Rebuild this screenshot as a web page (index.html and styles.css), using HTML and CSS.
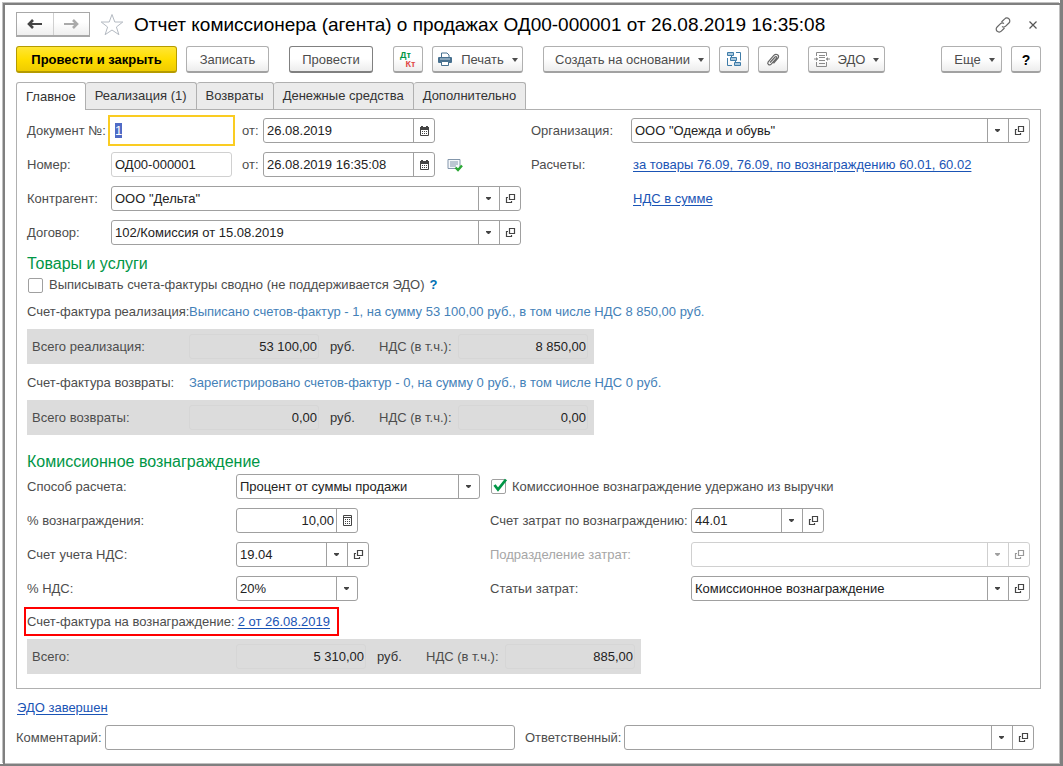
FILE: index.html
```html
<!DOCTYPE html>
<html lang="ru">
<head>
  <meta charset="UTF-8" />
  <meta name="viewport" content="width=device-width, initial-scale=1.0" />
  <title>Отчет комиссионера (агента) о продажах</title>
  <link rel="stylesheet" href="styles.css">
</head>
<body>
  <svg class="sprite" aria-hidden="true">
    <symbol id="i-open" viewBox="0 0 11 11">
      <path d="M4.500 1.500h5v5h-5zM3 4.500H1.500v5h5V8" fill="none" stroke="currentColor" stroke-width="1.200" />
    </symbol>
    <symbol id="i-calendar" viewBox="0 0 11 11">
      <path d="M1 2h9v3H1zM2 1h2v2H2zM7 1h2v2H7z" fill="currentColor" />
      <path d="M1.500 4.500h8v6h-8z" fill="none" stroke="currentColor" />
      <path d="M3 6.500h5M3 8.500h5" stroke="currentColor" stroke-dasharray="1 1" />
    </symbol>
    <symbol id="i-calc" viewBox="0 0 11 11">
      <path d="M1.500.5h8v10h-8zM1 2.500h9" fill="none" stroke="currentColor" />
      <path d="M3 4.500h5M3 6.500h5M3 8.500h5" stroke="currentColor" stroke-dasharray="1 1" />
    </symbol>
    <symbol id="i-caret" viewBox="0 0 6 4">
      <path d="M0 0h6L3 4z" fill="currentColor" />
    </symbol>
  </svg>

  <div class="window">
    <header class="titlebar">
      <div class="nav">
        <button type="button" aria-label="Назад"><svg width="16" height="10" viewBox="0 0 16 10"><path d="M2 5h13" stroke="currentColor" stroke-width="2" /><path d="M6 1L2 5l4 4" fill="none" stroke="currentColor" stroke-width="2.600" /></svg></button>
        <button type="button" class="nav-off" aria-label="Вперед"><svg width="16" height="10" viewBox="0 0 16 10"><path d="M1 5h13" stroke="currentColor" stroke-width="2" /><path d="M10 1l4 4-4 4" fill="none" stroke="currentColor" stroke-width="2.600" /></svg></button>
      </div>
      <svg class="star" width="24" height="24" viewBox="0 0 24 24"><path d="M12 1.500l2.800 7.500h8l-6.400 5 2.500 7.700L12 17l-6.900 4.700L7.600 14 1.200 9h8z" fill="#fff" stroke="#b4bac2" /></svg>
      <h1>Отчет комиссионера (агента) о продажах ОД00-000001 от 26.08.2019 16:35:08</h1>
      <button type="button" class="plain" aria-label="Ссылка"><svg width="18" height="18" viewBox="0 0 18 18"><g fill="none" stroke="#666" stroke-width="1.200"><path d="M7.500 6l3.200-3.200a2.900 2.900 0 0 1 4.200 0 2.900 2.900 0 0 1 0 4.200l-3.200 3.200a2.900 2.900 0 0 1-3.700.3" /><path d="M10.500 12l-3.200 3.200a2.900 2.900 0 0 1-4.200 0 2.900 2.900 0 0 1 0-4.200l3.200-3.200a2.900 2.900 0 0 1 3.700-.3" /></g></svg></button>
      <button type="button" class="plain close" aria-label="Закрыть"><svg width="8" height="8" viewBox="0 0 8 8"><path d="M.5.5l7 7M7.500.5l-7 7" stroke="#555" stroke-width="1.200" /></svg></button>
    </header>

    <div class="commands">
      <button type="button" class="btn btn-main">Провести и закрыть</button>
      <button type="button" class="btn btn-save">Записать</button>
      <button type="button" class="btn btn-post gap">Провести</button>
      <button type="button" class="btn btn-icon gap" aria-label="Проводки"><span class="dtkt"><span class="dt">Дт</span><span class="kt">Кт</span></span></button>
      <button type="button" class="btn btn-print">
        <svg width="16" height="15" viewBox="0 0 16 15"><path d="M4.500 5V1h5.500l2 2v2" fill="#fff" stroke="#47708f" /><rect x="1" y="5" width="14" height="6" rx="1" fill="#47708f" /><path d="M3 7h10" stroke="#c9d8e4" /><path d="M4.500 9.500h7v4h-7z" fill="#fff" stroke="#47708f" /></svg>
        Печать <svg class="caret"><use href="#i-caret" /></svg>
      </button>
      <button type="button" class="btn btn-base gap">Создать на основании <svg class="caret"><use href="#i-caret" /></svg></button>
      <button type="button" class="btn btn-icon" aria-label="Структура подчиненности"><svg width="16" height="15" viewBox="0 0 16 15"><g fill="#a9c8de" stroke="#3f7ca8"><path d="M1.500.5h6v3h-6zM4.500 5.500h6v3h-6zM8.500 10.500h6v3h-6z" /><path d="M10 .5h4.500v8M1.500 6v7.500H6M5.500 3.500v2M9.500 8.500v2" fill="none" /></g></svg></button>
      <button type="button" class="btn btn-icon" aria-label="Присоединенные файлы"><svg width="16" height="16" viewBox="0 0 16 16"><path d="M5 10.500l5-5.500c1-1 2.300.1 1.500 1.200l-5.300 6c-1.800 1.800-4.500-.2-3-2.400l5.600-6.400c2.500-2.500 6-.2 4.200 2.700L8.500 11.300" fill="none" stroke="#666" stroke-width="1.200" /></svg></button>
      <button type="button" class="btn btn-edo gap">
        <svg width="16" height="15" viewBox="0 0 16 15"><g fill="none" stroke="#8a8a8a"><path d="M2.500 4V.5h10V4M2.500 10v4.500h10V10" /><path d="M5 3.500h6M5 5.500h6M5 8.500h6M5 11.500h6" /><path d="M0 7h4M12 7h4" /></g><path d="M2 5l2 2-2 2zM14 5l-2 2 2 2z" fill="#8a8a8a" /></svg>
        ЭДО <svg class="caret"><use href="#i-caret" /></svg>
      </button>
      <div class="commands-end">
        <button type="button" class="btn btn-more">Еще <svg class="caret"><use href="#i-caret" /></svg></button>
        <button type="button" class="btn btn-icon btn-help">?</button>
      </div>
    </div>

    <nav class="tabs">
      <button type="button" class="tab active">Главное</button>
      <button type="button" class="tab">Реализация (1)</button>
      <button type="button" class="tab">Возвраты</button>
      <button type="button" class="tab">Денежные средства</button>
      <button type="button" class="tab">Дополнительно</button>
    </nav>

    <main class="panel">
      <div class="columns">
        <div class="rows head-left">
          <div class="row">
            <label for="doc">Документ №:</label>
            <input class="input doc" id="doc" type="text" value="1">
            <label class="from" for="docDate">от:</label>
            <div class="field date"><input id="docDate" type="text" value="26.08.2019"><button type="button" aria-label="Выбрать дату"><svg><use href="#i-calendar" /></svg></button></div>
          </div>
          <div class="row">
            <label for="num">Номер:</label>
            <input class="input num" id="num" type="text" value="ОД00-000001">
            <label class="from" for="numDate">от:</label>
            <div class="field date"><input id="numDate" type="text" value="26.08.2019 16:35:08"><button type="button" aria-label="Выбрать дату"><svg><use href="#i-calendar" /></svg></button></div>
            <svg class="posted" width="16" height="14" viewBox="0 0 16 14"><path d="M1 1.500h12v9H1z" fill="#f4f7fa" stroke="#8396ab" /><path d="M3 4h8M3 6h8M3 8h6" stroke="#8396ab" /><path d="M8.500 9.500l2.500 2.500 4-4.500" fill="none" stroke="#2aa834" stroke-width="2.400" /></svg>
          </div>
          <div class="row">
            <label for="partner">Контрагент:</label>
            <div class="field grow"><select id="partner"><option>ООО "Дельта"</option></select><button type="button" aria-label="Открыть"><svg><use href="#i-open" /></svg></button></div>
          </div>
          <div class="row">
            <label for="contract">Договор:</label>
            <div class="field grow"><select id="contract"><option>102/Комиссия от 15.08.2019</option></select><button type="button" aria-label="Открыть"><svg><use href="#i-open" /></svg></button></div>
          </div>
        </div>
        <div class="rows head-right">
          <div class="row">
            <label for="org">Организация:</label>
            <div class="field grow"><select id="org"><option>ООО "Одежда и обувь"</option></select><button type="button" aria-label="Открыть"><svg><use href="#i-open" /></svg></button></div>
          </div>
          <div class="row">
            <span class="caption">Расчеты:</span>
            <a href="#">за товары 76.09, 76.09, по вознаграждению 60.01, 60.02</a>
          </div>
          <div class="row">
            <span class="caption"></span>
            <a href="#">НДС в сумме</a>
          </div>
        </div>
      </div>

      <h2>Товары и услуги</h2>
      <div class="check-row">
        <input class="check" type="checkbox" id="summary">
        <label for="summary">Выписывать счета-фактуры сводно (не поддерживается ЭДО)</label>
        <a class="hint" href="#">?</a>
      </div>
      <div class="invoice">
        <span>Счет-фактура реализация:</span>
        <a href="#">Выписано счетов-фактур - 1, на сумму 53 100,00 руб., в том числе НДС 8 850,00 руб.</a>
      </div>
      <div class="totals">
        <label for="saleSum">Всего реализация:</label>
        <input id="saleSum" type="text" value="53 100,00" readonly>
        <span class="unit">руб.</span>
        <label class="vat" for="saleVat">НДС (в т.ч.):</label>
        <input id="saleVat" type="text" value="8 850,00" readonly>
      </div>
      <div class="invoice">
        <span>Счет-фактура возвраты:</span>
        <a href="#">Зарегистрировано счетов-фактур - 0, на сумму 0 руб., в том числе НДС 0 руб.</a>
      </div>
      <div class="totals">
        <label for="retSum">Всего возвраты:</label>
        <input id="retSum" type="text" value="0,00" readonly>
        <span class="unit">руб.</span>
        <label class="vat" for="retVat">НДС (в т.ч.):</label>
        <input id="retVat" type="text" value="0,00" readonly>
      </div>

      <h2 class="fee-title">Комиссионное вознаграждение</h2>
      <div class="columns">
        <div class="rows fee-left">
          <div class="row">
            <label for="method">Способ расчета:</label>
            <div class="field wide"><select id="method"><option>Процент от суммы продажи</option></select></div>
          </div>
          <div class="row">
            <label for="feePct">% вознаграждения:</label>
            <div class="field small"><input class="right" id="feePct" type="text" value="10,00"><button type="button" aria-label="Калькулятор"><svg><use href="#i-calc" /></svg></button></div>
          </div>
          <div class="row">
            <label for="vatAcc">Счет учета НДС:</label>
            <div class="field account"><select id="vatAcc"><option>19.04</option></select><button type="button" aria-label="Открыть"><svg><use href="#i-open" /></svg></button></div>
          </div>
          <div class="row">
            <label for="vatPct">% НДС:</label>
            <div class="field small"><select id="vatPct"><option>20%</option></select></div>
          </div>
        </div>
        <div class="rows fee-right">
          <div class="row held">
            <input class="check" type="checkbox" id="held" checked>
            <label for="held">Комиссионное вознаграждение удержано из выручки</label>
          </div>
          <div class="row">
            <label for="costAcc">Счет затрат по вознаграждению:</label>
            <div class="field account"><select id="costAcc"><option>44.01</option></select><button type="button" aria-label="Открыть"><svg><use href="#i-open" /></svg></button></div>
          </div>
          <div class="row off">
            <label for="dept">Подразделение затрат:</label>
            <div class="field grow"><select id="dept" disabled><option></option></select><button type="button" aria-label="Открыть" disabled><svg><use href="#i-open" /></svg></button></div>
          </div>
          <div class="row">
            <label for="costItem">Статьи затрат:</label>
            <div class="field grow"><select id="costItem"><option>Комиссионное вознаграждение</option></select><button type="button" aria-label="Открыть"><svg><use href="#i-open" /></svg></button></div>
          </div>
        </div>
      </div>

      <div class="fee-invoice">
        <span>Счет-фактура на вознаграждение:</span>
        <a href="#">2 от 26.08.2019</a>
      </div>
      <div class="totals totals-fee">
        <label for="feeSum">Всего:</label>
        <input id="feeSum" type="text" value="5 310,00" readonly>
        <span class="unit">руб.</span>
        <label class="vat" for="feeVat">НДС (в т.ч.):</label>
        <input id="feeVat" type="text" value="885,00" readonly>
      </div>
    </main>

    <footer class="footer">
      <a href="#">ЭДО завершен</a>
      <div class="footer-row">
        <label for="comment">Комментарий:</label>
        <input class="input" id="comment" type="text">
        <label class="resp" for="resp">Ответственный:</label>
        <div class="field"><select id="resp"><option></option></select><button type="button" aria-label="Открыть"><svg><use href="#i-open" /></svg></button></div>
      </div>
    </footer>
  </div>

  <script>
    const doc = document.getElementById('doc');
    doc.focus();
    doc.select();
  </script>
</body>
</html>
```
FILE: styles.css
```css
* { margin: 0; padding: 0; box-sizing: border-box; }
html { background: #fff; }
body {
  min-height: 100vh;
  display: flex;
  border: solid #808080;
  border-width: 0 3px 2px 0;
  padding: 3px 0 0 3px;
  font-family: "Liberation Sans", Arial, sans-serif;
  font-size: 13px;
  line-height: 18px;
  color: #4d4d4d;
}
.sprite { position: absolute; width: 0; height: 0; }
.window {
  flex: 1;
  min-width: 0;
  border: solid #808080;
  border-width: 2px 0 0 2px;
  box-shadow: inset -1px -1px 0 #c0c0c0, -1px -1px 0 #c0c0c0;
  padding: 7px 19px 13px 11px;
}
button, input, select { font: inherit; color: inherit; }
button { cursor: pointer; }
a { color: #1a54b5; text-underline-offset: 2px; }
h1 { flex: 1; font-size: 19px; font-weight: normal; line-height: 24px; color: #000; white-space: nowrap; }
h2 { font-size: 16px; font-weight: normal; line-height: 20px; color: #009646; }

/* title */
.titlebar { display: flex; align-items: center; height: 25px; }
.nav {
  display: flex;
  width: 74px;
  height: 25px;
  border: 1px solid #a8a8a8;
  border-bottom-width: 2px;
  margin-right: 10px;
}
.nav button {
  flex: 1;
  display: flex;
  align-items: center;
  justify-content: center;
  border: 0;
  background: linear-gradient(#fff 40%, #efefef);
  color: #444;
}
.nav .nav-off { border-left: 1px solid #d0d0d0; color: #aaa; }
.star { margin-right: 10px; }
.plain { display: flex; border: 0; background: none; }
.close { margin: 0 4px 0 17px; }

/* command bar */
.commands { display: flex; gap: 9px; margin-top: 9px; }
.btn {
  display: flex;
  align-items: center;
  justify-content: center;
  gap: 8px;
  height: 27px;
  padding-top: 1px;
  border: 1px solid #b0b0b0;
  border-bottom: 2px solid #a2a2a2;
  border-radius: 3px;
  background: linear-gradient(#fff 50%, #ededed);
  white-space: nowrap;
}
.btn.gap { margin-left: 11px; }
.btn-main {
  width: 161px;
  border-color: #b59b00;
  background: linear-gradient(#ffe635, #ffde00 50%, #efcc00);
  color: #000;
  font-weight: bold;
}
.btn-save { width: 83px; }
.btn-post { width: 84px; border-color: #808080; }
.btn-icon { width: 30px; }
.btn-print { width: 91px; }
.btn-base { width: 167px; padding-left: 6px; }
.btn-edo { width: 77px; }
.btn-more { width: 61px; padding-left: 6px; }
.btn-help { font-weight: bold; font-size: 14px; color: #000; }
.caret { width: 6px; height: 4px; }
.commands-end { display: flex; gap: 9px; margin-left: auto; }
.dtkt { display: grid; font-size: 9px; font-weight: bold; line-height: 9px; }
.dt { padding-right: 5px; color: #009646; }
.kt { padding-left: 5px; color: #e04848; }

/* tabs */
.tabs { display: flex; margin-top: 9px; }
.tab {
  height: 27px;
  padding: 0 9px;
  border: 1px solid #b0b0b0;
  border-bottom: 0;
  border-left-width: 0;
  border-radius: 3px 3px 0 0;
  background: #ebebeb;
  color: #333;
}
.tab.active {
  height: 28px;
  margin-bottom: -1px;
  border-left-width: 1px;
  background: #fff;
  z-index: 1;
}
.panel { border: 1px solid #b0b0b0; padding: 8px 10px 14px; }

/* form rows */
.columns { display: flex; }
.rows { display: flex; flex-direction: column; gap: 9px; }
.row { display: flex; align-items: center; height: 25px; white-space: nowrap; }
.head-left { width: 494px; margin-right: 10px; }
.head-left label:first-child { width: 84px; }
.head-right { flex: 1; }
.head-right label, .caption { width: 100px; }
.head-right a { margin-left: 2px; }
.fee-left { width: 463px; }
.fee-left label { width: 209px; }
.fee-right { flex: 1; }
.fee-right label { width: 201px; }
.fee-right .held label { width: auto; margin-left: 4px; }
.grow { flex: 1; }

.input, .field {
  height: 25px;
  border: 1px solid #a0a0a0;
  border-radius: 3px;
  background: #fff;
  color: #222;
}
.input { padding: 0 3px; min-width: 0; outline: 0; }
.field { display: flex; min-width: 0; }
.field input, .field select {
  flex: 1;
  min-width: 0;
  padding: 0 3px;
  border: 0;
  outline: 0;
  background: none;
}
.field select {
  appearance: none;
  padding-right: 24px;
  background: url("data:image/svg+xml,%3Csvg xmlns='http://www.w3.org/2000/svg' width='21' height='23'%3E%3Cpath d='M0 0h1v23H0z' fill='%23a0a0a0'/%3E%3Cpath d='M8 10h5v1l-2 2h-1l-2-2z' fill='%23444'/%3E%3C/svg%3E") right center no-repeat;
}
.field button {
  flex: none;
  width: 21px;
  border: 0;
  border-left: 1px solid #a0a0a0;
  background: none;
  color: #444;
  display: flex;
  align-items: center;
  justify-content: center;
}
.field button svg { width: 11px; height: 11px; }
.doc {
  width: 127px;
  height: 31px;
  margin: 0 -3px;
  padding: 0 5px;
  border: 2px solid #facc22;
  border-radius: 0;
}
.doc::selection { background: #4f6bc6; color: #fff; }
.num { width: 121px; border-color: #d0d0d0; }
.from { width: 31px; padding-left: 10px; }
.date { width: 172px; }
.posted { margin-left: 12px; }
.wide { width: 244px; }
.small { width: 122px; }
.account { width: 133px; }
.field .right { padding-right: 2px; text-align: right; }
.off { color: #a6a6a6; }
.off .field, .off button { border-color: #d0d0d0; color: #999; }
.off select { opacity: .5; }

.check {
  appearance: none;
  width: 15px;
  height: 15px;
  margin-left: 1px;
  border: 1px solid #a0a0a0;
  border-radius: 2px;
}
.check:checked {
  width: 17px;
  height: 17px;
  border: 0;
  background: url("data:image/svg+xml,%3Csvg xmlns='http://www.w3.org/2000/svg' width='17' height='17'%3E%3Crect x='.5' y='1.500' width='14' height='14' rx='1.500' fill='%23fff' stroke='%23a0a0a0'/%3E%3Cpath d='M3.500 7l3.500 4.500L15 1.500' fill='none' stroke='%23009646' stroke-width='2.800'/%3E%3C/svg%3E") no-repeat;
}

/* goods and services */
h2 { margin-top: 9px; }
.check-row { display: flex; align-items: center; height: 22px; }
.check-row label { margin-left: 6px; }
.hint { margin-left: 5px; color: #0070b4; text-decoration: none; font-weight: bold; }
.invoice { display: flex; margin: 7px 0 8px; white-space: nowrap; }
.invoice span { width: 162px; }
.invoice a { color: #4481b8; text-decoration: none; }
.totals {
  display: flex;
  align-items: center;
  width: 567px;
  height: 35px;
  padding: 0 6px 0 5px;
  background: #dcdcdc;
  white-space: nowrap;
}
.totals label:first-child { width: 157px; }
.totals input {
  width: 130px;
  height: 25px;
  padding: 0 1px;
  border: 1px solid #d6d6d6;
  border-radius: 3px;
  background: none;
  color: #222;
  text-align: right;
  outline: 0;
}
.unit { width: 60px; padding-left: 11px; color: #333; }
.totals .vat { width: 79px; }
.totals + .invoice { margin-top: 10px; }

/* commission */
.fee-title { margin: 17px 0 2px; }
.fee-invoice {
  display: flex;
  align-items: center;
  gap: 3px;
  width: max-content;
  height: 29px;
  margin: 6px 0 3px -3px;
  padding: 0 7px 0 1px;
  border: 2px solid #f00;
}
.totals-fee { width: 614px; }
.totals-fee label:first-child { width: 204px; }

/* footer */
.footer { margin-top: 10px; }
.footer > a { display: inline-block; margin-left: 1px; }
.footer-row {
  display: grid;
  grid-template-columns: 89px 1fr 109px 1fr;
  align-items: center;
  margin-top: 8px;
  padding-right: 7px;
}
.footer-row .resp { padding-left: 10px; }
```
